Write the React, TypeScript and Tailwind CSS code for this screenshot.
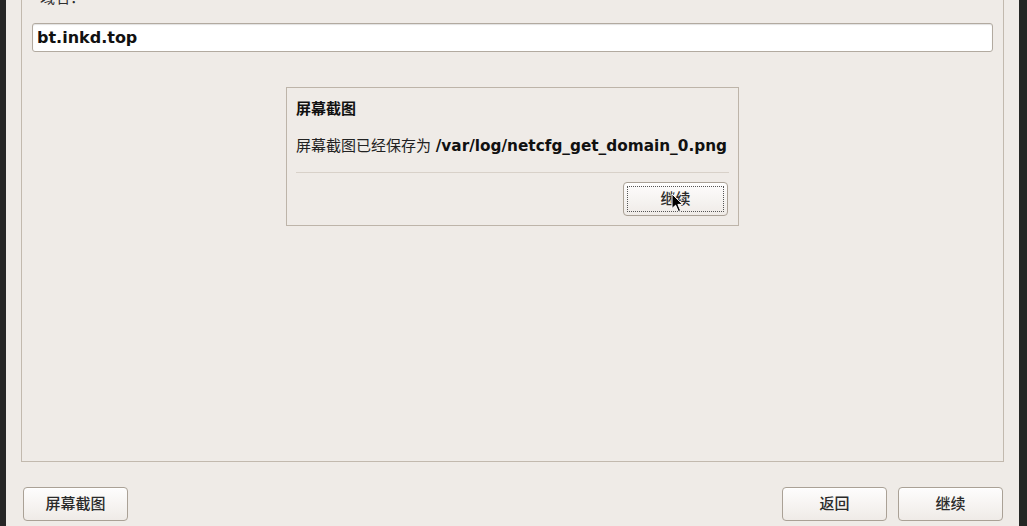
import React from "react";

const SANS = "font-['DejaVu_Sans','Noto_Sans_CJK_SC',sans-serif]";

function GtkButton({
  label,
  focused,
  className = "",
}: {
  label: string;
  focused?: boolean;
  className?: string;
}) {
  return (
    <button
      className={`relative w-[105px] h-[34px] rounded-[4px] border border-[#aaa196] bg-gradient-to-b from-[#fefdfd] to-[#efebe7] text-[15px] font-medium text-[#2a2a2a] shadow-[inset_0_1px_0_#ffffff] ${SANS} ${className}`}
    >
      {focused && (
        <span className="absolute inset-[3px] border border-dotted border-[#555]" />
      )}
      <span className="relative">{label}</span>
    </button>
  );
}

function Cursor() {
  return (
    <svg
      className="absolute left-[48px] top-[11px]"
      width="13"
      height="20"
      viewBox="0 0 13 20"
      aria-hidden
    >
      <path
        d="M1 1 L1 15.5 L4.6 12.2 L7.4 18.6 L9.6 17.6 L6.9 11.4 L11.6 11.4 Z"
        fill="#000"
        stroke="#fff"
        strokeWidth="1"
        strokeLinejoin="round"
      />
    </svg>
  );
}

export default function App() {
  return (
    <div className={`flex w-[1027px] h-[526px] overflow-hidden bg-[#efebe7] ${SANS}`}>
      <div className="w-[6px] bg-[#262626]" />

      <div className="flex flex-1 flex-col">
        {/* main panel */}
        <div className="mx-[15px] h-[462px] border-x border-b border-[#c2b9ae] px-[10px] flex flex-col">
          <div className="h-[23px]">
            <div className="ml-[8px] -mt-[12px] text-[15px] leading-[20px] text-[#2e2e2e]">
              域名：
            </div>
          </div>
          <div className="h-[29px] rounded-[3px] border border-[#b2aaa0] bg-white flex items-center px-[4px] shadow-[inset_0_1px_1px_rgba(0,0,0,0.12)]">
            <span className="text-[16px] font-bold text-[#111]">bt.inkd.top</span>
          </div>

          {/* screenshot dialog */}
          <div className="mx-auto mt-[35px] w-[453px] h-[139px] border border-[#bdb4a9] flex flex-col px-[9px] pt-[11px]">
            <div className="text-[15px] leading-[20px] font-bold text-[#111]">屏幕截图</div>
            <div className="mt-[17px] text-[15px] leading-[20px] text-[#222] whitespace-nowrap">
              屏幕截图已经保存为 <span className="text-[15.3px] font-bold text-[#111]">/var/log/netcfg_get_domain_0.png</span>
            </div>
            <div className="mt-[16px] h-px bg-[#d8d1c9]" />
            <div className="mt-[9px] flex justify-end pr-[1px]">
              <div className="relative">
                <GtkButton label="继续" focused />
                <Cursor />
              </div>
            </div>
          </div>
        </div>

        {/* bottom buttons */}
        <div className="mt-[25px] flex items-center pl-[17px] pr-[16px]">
          <GtkButton label="屏幕截图" />
          <div className="flex-1" />
          <GtkButton label="返回" />
          <GtkButton label="继续" className="ml-[11px]" />
        </div>
      </div>

      <div className="w-[8px] bg-[#242624]" />
    </div>
  );
}
